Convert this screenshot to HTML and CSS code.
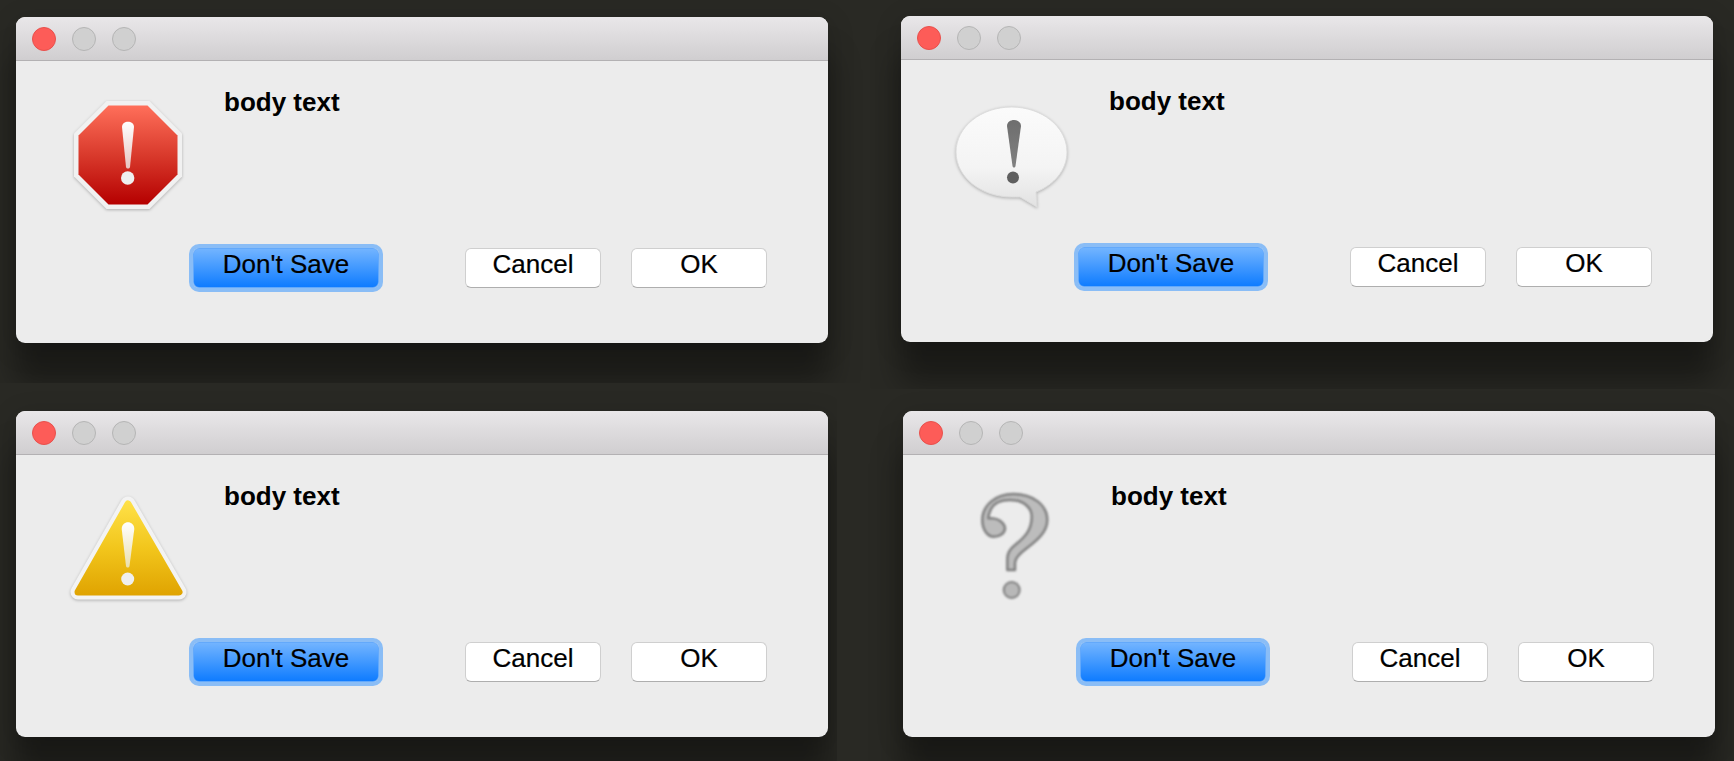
FILE: index.html
```html
<!DOCTYPE html>
<html lang="en">
<head>
<meta charset="utf-8">
<title>Dialogs</title>
<link rel="stylesheet" href="styles.css">
</head>
<body>
<main class="desktop">

  <section class="tile tile-a">
    <div class="dialog">
      <header class="titlebar"><span class="light light-close"></span><span class="light"></span><span class="light"></span></header>
      <div class="content">
        <div class="message">
          <svg class="icon" viewBox="0 0 128 128" aria-hidden="true">
            <defs>
              <linearGradient id="red" x1="0" y1="0" x2="0" y2="1"><stop offset="0" stop-color="#ff6f5a"/><stop offset=".5" stop-color="#d93a2c"/><stop offset="1" stop-color="#b50000"/></linearGradient>
              <linearGradient id="red-mark" x1="0" y1="0" x2="0" y2="1"><stop offset="0" stop-color="#ffffff"/><stop offset="1" stop-color="#e8c4c0"/></linearGradient>
            </defs>
            <path class="halo" d="M42.500 10H85.500L118 42.500V85.500L85.500 118H42.500L10 85.500V42.500Z" fill="#f1f1f1"/>
            <path d="M44.500 14.500H83.500L113.500 44.500V83.500L83.500 113.500H44.500L14.500 83.500V44.500Z" fill="url(#red)"/>
            <path d="M58 36C58 29 70 29 70 36L66 76C65.500 78 62.500 78 62 76Z" fill="url(#red-mark)"/>
            <circle cx="63.700" cy="87" r="6.700" fill="#efefef"/>
          </svg>
          <p class="text">body text</p>
        </div>
        <div class="actions">
          <button class="btn btn-default" type="button">Don't Save</button>
          <button class="btn btn-cancel" type="button">Cancel</button>
          <button class="btn" type="button">OK</button>
        </div>
      </div>
    </div>
  </section>

  <section class="tile tile-b">
    <div class="dialog">
      <header class="titlebar"><span class="light light-close"></span><span class="light"></span><span class="light"></span></header>
      <div class="content">
        <div class="message">
          <svg class="icon" viewBox="0 0 128 128" aria-hidden="true">
            <defs>
              <linearGradient id="bubble" x1="0" y1="0" x2="0" y2="1"><stop offset="0" stop-color="#fbfbfb"/><stop offset=".6" stop-color="#f4f4f4"/><stop offset="1" stop-color="#e2e2e2"/></linearGradient>
              <linearGradient id="bubble-mark" x1="0" y1="0" x2="0" y2="1"><stop offset="0" stop-color="#6e6e6e"/><stop offset="1" stop-color="#808080"/></linearGradient>
            </defs>
            <path class="halo" d="M62.500 17C93 17 118 37 118 62C118 80 105 95 87 102L88 117L71 107C68 107 65 107 62.500 107C32 107 7 87 7 62C7 37 32 17 62.500 17Z" fill="url(#bubble)" stroke="#dcdcdc"/>
            <path d="M58 36C58 28 72 28 72 36L66.500 76C66 78 64 78 63.500 76Z" fill="url(#bubble-mark)"/>
            <circle cx="64" cy="87.500" r="6" fill="#5f5f5f"/>
          </svg>
          <p class="text">body text</p>
        </div>
        <div class="actions">
          <button class="btn btn-default" type="button">Don't Save</button>
          <button class="btn btn-cancel" type="button">Cancel</button>
          <button class="btn" type="button">OK</button>
        </div>
      </div>
    </div>
  </section>

  <section class="tile tile-c">
    <div class="dialog">
      <header class="titlebar"><span class="light light-close"></span><span class="light"></span><span class="light"></span></header>
      <div class="content">
        <div class="message">
          <svg class="icon" viewBox="0 0 128 128" aria-hidden="true">
            <defs>
              <linearGradient id="amber" gradientUnits="userSpaceOnUse" x1="0" y1="14" x2="0" y2="112"><stop offset="0" stop-color="#ffe24a"/><stop offset=".5" stop-color="#f2c61c"/><stop offset="1" stop-color="#dfa200"/></linearGradient>
              <linearGradient id="amber-mark" x1="0" y1="0" x2="0" y2="1"><stop offset="0" stop-color="#ffffff"/><stop offset="1" stop-color="#eadfae"/></linearGradient>
            </defs>
            <path class="halo" d="M64 19L115 107H14Z" fill="#f3f3f3" stroke="#f3f3f3" stroke-width="15" stroke-linejoin="round"/>
            <path d="M64 19L115 107H14Z" fill="url(#amber)" stroke="url(#amber)" stroke-width="7" stroke-linejoin="round"/>
            <path d="M57.700 44C57.700 35 70.300 35 70.300 44L65.500 81C65 83 62.500 83 62 81Z" fill="url(#amber-mark)"/>
            <circle cx="63.700" cy="94" r="6.500" fill="#efefef"/>
          </svg>
          <p class="text">body text</p>
        </div>
        <div class="actions">
          <button class="btn btn-default" type="button">Don't Save</button>
          <button class="btn btn-cancel" type="button">Cancel</button>
          <button class="btn" type="button">OK</button>
        </div>
      </div>
    </div>
  </section>

  <section class="tile tile-d">
    <div class="dialog">
      <header class="titlebar"><span class="light light-close"></span><span class="light"></span><span class="light"></span></header>
      <div class="content">
        <div class="message">
          <svg class="icon" viewBox="0 0 128 128" aria-hidden="true">
            <g class="soft">
              <path d="M31.300 35C31.300 20 45 9 62.300 9C82 9 96.300 20 96.300 35C96.300 46 88 54 75.700 63.300C68 69 64 73 64 78V85H56.300V74C56.300 68 60 63 64 60C74 52 80.700 45 80.700 31.700C80.700 22 72 15 59 15C50 15 43 18 40 24C38 28 37.300 31 37.300 33.300C39 33 45 33 49 35.700C52 38 54 40 54 43.300C54 48 49 51.700 43 51.700C36 51.700 31.300 44 31.300 35Z" fill="#bcbcbc" stroke="#808080" stroke-width="2.500" stroke-linejoin="round"/>
              <circle cx="60.700" cy="105" r="8" fill="#b8b8b8" stroke="#808080" stroke-width="2"/>
            </g>
          </svg>
          <p class="text">body text</p>
        </div>
        <div class="actions">
          <button class="btn btn-default" type="button">Don't Save</button>
          <button class="btn btn-cancel" type="button">Cancel</button>
          <button class="btn" type="button">OK</button>
        </div>
      </div>
    </div>
  </section>

</main>
</body>
</html>
```

FILE: styles.css
```css
html, body {
  margin: 0;
  padding: 0;
  height: 100%;
  background: #292924;
  overflow: hidden;
}

.desktop {
  position: relative;
  width: 1734px;
  height: 761px;
  font-family: "Liberation Sans", Arial, sans-serif;
}

/* Four captured windows, each clipped to its own tile with its own shadow */
.tile {
  position: absolute;
  overflow: hidden;
  box-sizing: border-box;
}
.tile-a { left: 0; top: 0; width: 870px; height: 383px; padding: 17px 0 0 16px; }
.tile-b { left: 870px; top: 0; width: 864px; height: 389px; padding: 16px 0 0 31px; }
.tile-c { left: 0; top: 383px; width: 837px; height: 378px; padding: 28px 0 0 16px; }
.tile-d { left: 837px; top: 389px; width: 897px; height: 372px; padding: 22px 0 0 66px; }

.dialog {
  width: 812px;
  height: 326px;
  border-radius: 9px;
  background: #ececec;
  box-shadow: 0 40px 30px 2px rgba(0, 0, 0, 0.34), 0 6px 26px 2px rgba(0, 0, 0, 0.16);
  overflow: hidden;
}

.titlebar {
  box-sizing: border-box;
  height: 44px;
  padding: 10px 16px 0;
  display: flex;
  gap: 16px;
  background: linear-gradient(#e9e7e9, #d0ced0);
  border-bottom: 1px solid #b3b1b3;
}

.light {
  box-sizing: border-box;
  width: 24px;
  height: 24px;
  border-radius: 50%;
  background: #d0d0d0;
  border: 1px solid #b5b5b5;
}
.light-close {
  background: #fd5c58;
  border-color: #e8504c;
}

.content {
  height: 282px;
  display: flex;
  flex-direction: column;
}

.message {
  display: flex;
  height: 187px;
  box-sizing: border-box;
  padding: 26px 0 0 48px;
}

.icon {
  width: 128px;
  height: 128px;
  margin-top: 4px;
  flex: none;
}
.halo {
  filter: drop-shadow(0 1.500px 1.500px rgba(0, 0, 0, 0.25));
}
.soft {
  filter: blur(1px);
}

.text {
  margin: 0 0 0 32px;
  font-size: 26px;
  line-height: 30px;
  font-weight: 700;
  color: #000;
}

.actions {
  display: flex;
  align-items: flex-start;
  padding-left: 177px;
}

.btn {
  box-sizing: border-box;
  width: 136px;
  height: 40px;
  margin: 0;
  padding: 0 0 9px;
  font-family: inherit;
  font-size: 26px;
  line-height: 30px;
  color: #000;
  background: #fff;
  border: 1px solid #cfcfcf;
  border-bottom-color: #aeaeae;
  border-radius: 6px;
  -webkit-text-stroke: 0.2px #000;
}
.btn-default {
  width: 186px;
  background: linear-gradient(#72b4ff, #0f7cff);
  border: 1px solid #63a9fb;
  box-shadow: 0 0 0 4px #8abdf6;
}
.btn-cancel {
  margin: 0 30px 0 86px;
}
```
